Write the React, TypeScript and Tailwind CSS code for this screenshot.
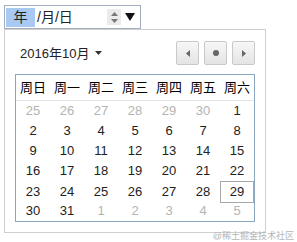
import React from "react";

const rows: { d: number; o: boolean }[][] = [
  [25, 26, 27, 28, 29, 30, 1].map((d, i) => ({ d, o: i < 6 })),
  [2, 3, 4, 5, 6, 7, 8].map((d) => ({ d, o: false })),
  [9, 10, 11, 12, 13, 14, 15].map((d) => ({ d, o: false })),
  [16, 17, 18, 19, 20, 21, 22].map((d) => ({ d, o: false })),
  [23, 24, 25, 26, 27, 28, 29].map((d) => ({ d, o: false })),
  [30, 31, 1, 2, 3, 4, 5].map((d, i) => ({ d, o: i > 1 })),
];

const heads = ["周日", "周一", "周二", "周三", "周四", "周五", "周六"];

export default function App() {
  return (
    <div
      className="relative w-[297px] h-[242px] bg-white overflow-hidden text-[#222]"
      style={{ fontFamily: '"Liberation Sans", "Noto Sans CJK SC", sans-serif' }}
    >
      <div className="pl-[4px] pt-[5px]">
        <div className="w-[137px] h-[24px] border border-[#a4acc0] flex items-center text-[14px]">
          <span className="ml-[1px] w-[29px] h-[19px] bg-[#a9c9f3] flex items-center justify-center leading-none">
            年
          </span>
          <span className="ml-[2px] leading-none">/月/日</span>
          <div className="ml-auto mr-[19px] w-[14px] h-[16px] bg-[#ebebeb] flex flex-col items-center justify-center gap-[3px]">
            <svg width="7" height="4" viewBox="0 0 7 4">
              <path d="M0 4 L3.5 0 L7 4 Z" fill="#777" />
            </svg>
            <svg width="7" height="4" viewBox="0 0 7 4">
              <path d="M0 0 L3.5 4 L7 0 Z" fill="#777" />
            </svg>
          </div>
          <svg className="absolute left-[125px] top-[13px]" width="10" height="8" viewBox="0 0 10 8">
            <path d="M0 0 L10 0 L5 8 Z" fill="#111" />
          </svg>
        </div>
        <div className="w-[262px] h-[204px] border border-[#cfcfcf] px-[10px] pt-[11px]">
          <div className="flex items-center h-[24px]">
            <span className="ml-[5px] text-[13px] leading-none">2016年10月</span>
            <svg className="ml-[6px]" width="7" height="4" viewBox="0 0 7 4">
              <path d="M0 0 L7 0 L3.5 4 Z" fill="#333" />
            </svg>
            <div className="ml-auto flex gap-[5px]">
              {[0, 1, 2].map((k) => (
                <div
                  key={k}
                  className="w-[23px] h-[24px] border border-[#c9c9c9] rounded-[2px] bg-gradient-to-b from-[#f7f7f7] to-[#e4e4e4] flex items-center justify-center"
                >
                  {k === 0 && (
                    <svg width="4" height="7" viewBox="0 0 4 7">
                      <path d="M4 0 L0 3.5 L4 7 Z" fill="#666" />
                    </svg>
                  )}
                  {k === 1 && <div className="w-[6px] h-[6px] rounded-full bg-[#666]" />}
                  {k === 2 && (
                    <svg width="4" height="7" viewBox="0 0 4 7">
                      <path d="M0 0 L4 3.5 L0 7 Z" fill="#666" />
                    </svg>
                  )}
                </div>
              ))}
            </div>
          </div>
          <div className="mt-[9px] w-[240px] border border-[#8aa6c1]">
            <div className="grid grid-cols-7 h-[26px] border-b border-[#e3e3e3] text-[13px] text-black">
              {heads.map((h) => (
                <div key={h} className="flex items-center justify-center">
                  {h}
                </div>
              ))}
            </div>
            {rows.map((r, i) => (
              <div key={i} className="grid grid-cols-7 h-[20px] text-[13px]">
                {r.map((c, j) => (
                  <div
                    key={j}
                    className={
                      "flex items-center justify-center " +
                      (c.o ? "text-[#b4b4b4] " : "text-[#222] ") +
                      (i === 4 && j === 6 ? "border border-[#a8a8a8]" : "")
                    }
                  >
                    {c.d}
                  </div>
                ))}
              </div>
            ))}
          </div>
        </div>
      </div>
      <div className="absolute right-[3px] bottom-[1px] text-[9px] leading-none text-[#b5b5b5]">
        @稀土掘金技术社区
      </div>
    </div>
  );
}
